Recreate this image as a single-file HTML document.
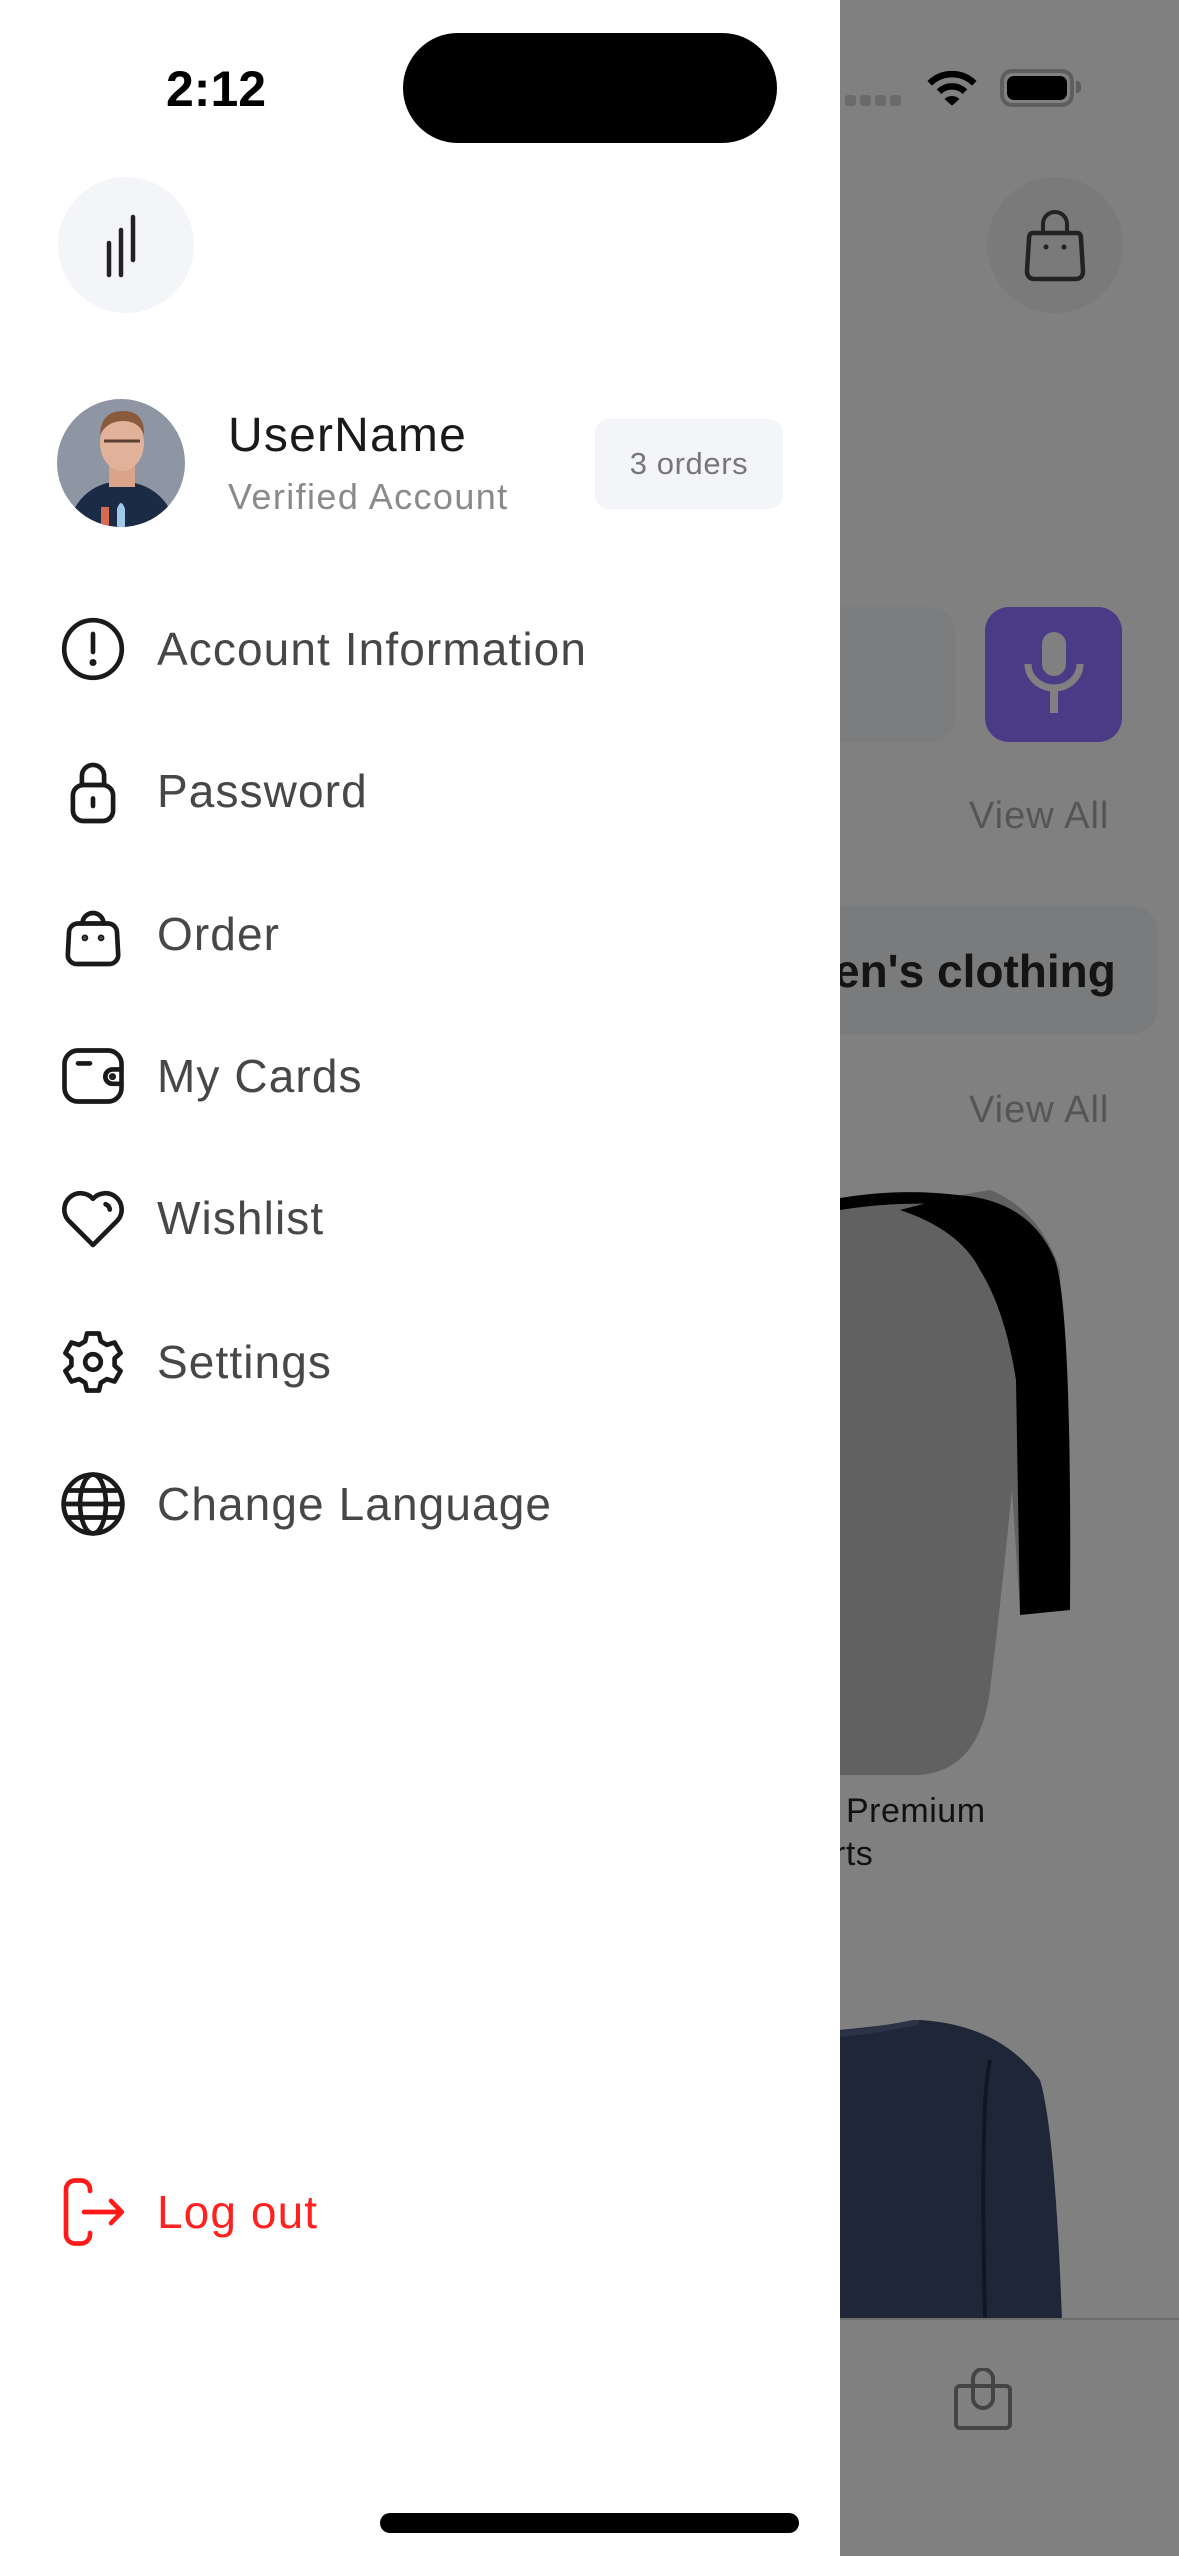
<!DOCTYPE html>
<html><head><meta charset="utf-8"><style>
*{margin:0;padding:0;box-sizing:border-box}
body{width:1179px;height:2556px;position:relative;overflow:hidden;background:#fff;font-family:"Liberation Sans",sans-serif}
.a{position:absolute}
.right{left:840px;top:0;width:339px;height:2556px;background:#808080;overflow:hidden}
.mi{position:absolute;left:157px;font-size:46px;color:#474747;line-height:1;letter-spacing:1.1px}
.ic{position:absolute;left:57px;width:72px;height:72px}
</style></head><body>

<div class="a right">
  <div class="a" style="left:5px;top:95px;width:60px;height:10px">
    <span class="a" style="left:0;top:0;width:11px;height:11px;border-radius:3px;background:#6a6a6a"></span>
    <span class="a" style="left:15px;top:0;width:11px;height:11px;border-radius:3px;background:#6a6a6a"></span>
    <span class="a" style="left:30px;top:0;width:11px;height:11px;border-radius:3px;background:#6a6a6a"></span>
    <span class="a" style="left:45px;top:0;width:11px;height:11px;border-radius:3px;background:#6a6a6a"></span>
  </div>
  <svg class="a" style="left:86px;top:68px" width="52" height="40" viewBox="0 0 56 42"><path d="M4 16 A34 34 0 0 1 52 16" stroke="#000" stroke-width="7" fill="none"/><path d="M14 25 A20 20 0 0 1 42 25" stroke="#000" stroke-width="7" fill="none"/><path d="M20 33 L28 40 L36 33 A11 11 0 0 0 20 33Z" fill="#000"/></svg>
  <div class="a" style="left:160px;top:69px;width:74px;height:38px;border:4px solid #5e5e5e;border-radius:12px;padding:3px"><div style="width:100%;height:100%;background:#000;border-radius:7px"></div></div>
  <div class="a" style="left:236px;top:81px;width:5px;height:12px;background:#5e5e5e;border-radius:0 4px 4px 0"></div>
  <div class="a" style="left:147px;top:177px;width:136px;height:136px;border-radius:50%;background:#7a7a7a"></div>
  <svg class="a" style="left:183px;top:207px" width="64" height="76" viewBox="0 0 64 76"><path d="M20 26 V17 A12 12 0 0 1 44 17 V26" stroke="#222" stroke-width="4" fill="none"/><path d="M10 26 H54 Q58 26 58 32 L60 64 Q60 72 52 72 H12 Q4 72 4 64 L6 32 Q6 26 10 26Z" stroke="#222" stroke-width="4.5" fill="none"/><circle cx="23" cy="40" r="2.5" fill="#222"/><circle cx="41" cy="40" r="2.5" fill="#222"/></svg>
  <div class="a" style="left:-40px;top:607px;width:156px;height:135px;border-radius:28px;background:#7b7c7e"></div>
  <div class="a" style="left:145px;top:607px;width:137px;height:135px;border-radius:24px;background:#4b3a86"></div>
  <svg class="a" style="left:183px;top:630px" width="62" height="90" viewBox="0 0 62 90"><rect x="19" y="2" width="24" height="44" rx="12" fill="#808080"/><path d="M5 34 A26 24 0 0 0 57 34" stroke="#808080" stroke-width="7" fill="none"/><rect x="27" y="58" width="8" height="25" fill="#808080"/></svg>
  <div class="a" style="left:129px;top:795px;font-size:38px;color:#555;letter-spacing:1px">View All</div>
  <div class="a" style="left:-40px;top:905px;width:358px;height:130px;border-radius:28px;background:#7a7b7d"></div>
  <div class="a" style="left:-6px;top:944px;font-size:46px;font-weight:bold;color:#141414;white-space:nowrap">en's clothing</div>
  <div class="a" style="left:129px;top:1089px;font-size:38px;color:#555;letter-spacing:1px">View All</div>
  <svg class="a" style="left:0;top:1190px" width="240" height="590" viewBox="0 0 240 590"><path d="M0 10 Q60 5 120 5 L150 0 Q200 20 220 80 L228 420 L180 420 L172 300 Q160 420 150 500 Q140 580 80 585 L0 585Z" fill="#616161"/><path d="M118 5 Q190 10 215 70 Q232 120 230 420 L180 425 L176 190 Q165 120 140 80 Q120 40 60 20 Z" fill="#000"/><path d="M0 8 Q60 -2 118 5 L100 14 Q50 12 0 20Z" fill="#000"/></svg>
  <div class="a" style="left:6px;top:1792px;font-size:34px;color:#111;letter-spacing:0.5px">Premium</div>
  <div class="a" style="left:-6px;top:1835px;font-size:34px;color:#111;letter-spacing:0.5px">rts</div>
  <svg class="a" style="left:0;top:2020px" width="240" height="300" viewBox="0 0 240 300"><path d="M0 10 Q50 5 80 0 Q160 5 200 60 Q215 110 222 300 L0 300Z" fill="#1f2637"/><path d="M150 40 Q140 80 145 300" stroke="#111722" stroke-width="4" fill="none"/><path d="M0 14 Q40 10 78 2" stroke="#2b3346" stroke-width="6" fill="none"/></svg>
  <div class="a" style="left:0;top:2318px;width:339px;height:2px;background:#6e6e6e"></div>
  <svg class="a" style="left:112px;top:2368px" width="62" height="64" viewBox="0 0 62 64"><path d="M21 20 V11 A10 10 0 0 1 41 11 V20" stroke="#444" stroke-width="4" fill="none"/><rect x="4" y="18" width="54" height="42" rx="4" stroke="#444" stroke-width="4" fill="none"/><path d="M21 18 V30 A10 10 0 0 0 41 30 V18" stroke="#444" stroke-width="4" fill="none"/></svg>
</div>

<div class="a" style="left:166px;top:60px;font-size:50px;font-weight:bold;color:#000">2:12</div>
<div class="a" style="left:403px;top:33px;width:374px;height:110px;border-radius:55px;background:#000"></div>

<div class="a" style="left:58px;top:177px;width:136px;height:136px;border-radius:50%;background:#f4f5f9"></div>
<svg class="a" style="left:100px;top:212px" width="50" height="70" viewBox="0 0 50 70"><path d="M9 31 V63 M21 18 V63 M33 5 V48" stroke="#222" stroke-width="4.5" stroke-linecap="round"/></svg>

<svg class="a" style="left:57px;top:399px" width="128" height="128" viewBox="0 0 128 128"><defs><clipPath id="c"><circle cx="64" cy="64" r="64"/></clipPath></defs><g clip-path="url(#c)"><rect width="128" height="128" fill="#8e95a3"/><path d="M10 128 Q20 92 50 84 L78 84 Q110 92 120 128Z" fill="#1b2a45"/><rect x="52" y="62" width="26" height="26" fill="#d9a48a"/><ellipse cx="65" cy="44" rx="22" ry="28" fill="#e2b199"/><path d="M43 36 Q44 12 66 12 Q88 12 87 36 Q82 22 66 22 Q50 22 43 36Z" fill="#8a5a3c"/><path d="M47 42 H83" stroke="#5a4030" stroke-width="3"/><path d="M60 110 Q64 98 68 110 L68 128 L60 128Z" fill="#9fc9e6"/><path d="M44 108 H52 V128 H44Z" fill="#d86a50"/></g></svg>

<div class="a" style="left:228px;top:408px;font-size:48px;color:#1a1a1a;letter-spacing:1.2px">UserName</div>
<div class="a" style="left:228px;top:476px;font-size:36px;color:#8a8a8a;letter-spacing:1.4px">Verified Account</div>
<div class="a" style="left:595px;top:419px;width:188px;height:90px;border-radius:14px;background:#f4f5f8;font-size:31px;color:#777;display:flex;align-items:center;justify-content:center;letter-spacing:0.6px">3 orders</div>

<svg class="ic" style="top:613px" viewBox="0 0 24 24" fill="none" stroke="#1a1a1a" stroke-width="1.55" stroke-linecap="round"><circle cx="12" cy="12" r="9.6"/><path d="M12 7v6"/><circle cx="12" cy="16.5" r="0.4" fill="#1a1a1a"/></svg>
<div class="mi" style="top:626px">Account Information</div>

<svg class="ic" style="top:755px" viewBox="0 0 24 24" fill="none" stroke="#1a1a1a" stroke-width="1.55" stroke-linecap="round"><path d="M8.3 10V7a3.7 3.7 0 0 1 7.4 0v3"/><rect x="5.3" y="10" width="13.4" height="12" rx="3.5"/><path d="M12 14.5v2.5"/></svg>
<div class="mi" style="top:768px">Password</div>

<svg class="ic" style="top:898px" viewBox="0 0 24 24" fill="none" stroke="#1a1a1a" stroke-width="1.55" stroke-linecap="round"><path d="M8.5 8.5a3.5 3.5 0 0 1 7 0"/><path d="M7 8.5h10a3 3 0 0 1 3 3l.4 7.5a3 3 0 0 1-3 3H6.6a3 3 0 0 1-3-3L4 11.5a3 3 0 0 1 3-3z"/><circle cx="9.3" cy="13.3" r="0.35" fill="#1a1a1a"/><circle cx="14.7" cy="13.3" r="0.35" fill="#1a1a1a"/></svg>
<div class="mi" style="top:911px">Order</div>

<svg class="ic" style="top:1040px" viewBox="0 0 24 24" fill="none" stroke="#1a1a1a" stroke-width="1.55" stroke-linecap="round"><rect x="2.5" y="3.5" width="19" height="17" rx="4.5"/><path d="M21.5 9.8h-3a2.4 2.4 0 0 0 0 4.8h3"/><path d="M7 7.8h4"/><circle cx="18.5" cy="12.2" r="0.4" fill="#1a1a1a"/></svg>
<div class="mi" style="top:1053px">My Cards</div>

<svg class="ic" style="top:1182px" viewBox="0 0 24 24" fill="none" stroke="#1a1a1a" stroke-width="1.55" stroke-linecap="round" stroke-linejoin="round"><path d="M12 21 L3.8 12.8 A5 5 0 0 1 12 5.6 A5 5 0 0 1 20.2 12.8Z"/><path d="M16.2 7.4 a2.3 2.3 0 0 1 1.4 1.8"/></svg>
<div class="mi" style="top:1195px">Wishlist</div>

<svg class="ic" style="top:1326px" viewBox="0 0 24 24" fill="none" stroke="#1a1a1a" stroke-width="1.55" stroke-linejoin="round"><path d="M10 2.5h4l.6 2.6 2 1.2 2.6-.8 2 3.5-2 1.8v2.4l2 1.8-2 3.5-2.6-.8-2 1.2-.6 2.6h-4l-.6-2.6-2-1.2-2.6.8-2-3.5 2-1.8v-2.4l-2-1.8 2-3.5 2.6.8 2-1.2z"/><circle cx="12" cy="12" r="2.6"/></svg>
<div class="mi" style="top:1339px">Settings</div>

<svg class="ic" style="top:1468px" viewBox="0 0 24 24" fill="none" stroke="#1a1a1a" stroke-width="1.55"><circle cx="12" cy="12" r="9.8"/><ellipse cx="12" cy="12" rx="4.3" ry="9.8"/><path d="M2.2 12h19.6M3.3 7.5h17.4M3.3 16.5h17.4"/></svg>
<div class="mi" style="top:1481px">Change Language</div>

<svg class="ic" style="top:2176px" viewBox="0 0 24 24" fill="none" stroke="#ff1a1a" stroke-width="1.55" stroke-linecap="round" stroke-linejoin="round"><path d="M11 5V4.5A3 3 0 0 0 8 1.5H6A3 3 0 0 0 3 4.5v15a3 3 0 0 0 3 3h2a3 3 0 0 0 3-3V19"/><path d="M9 12h12.5M18 8.3l3.6 3.7-3.6 3.7"/></svg>
<div class="mi" style="top:2189px;color:#ff2020">Log out</div>

<div class="a" style="left:380px;top:2513px;width:419px;height:20px;border-radius:10px;background:#000"></div>
</body></html>
